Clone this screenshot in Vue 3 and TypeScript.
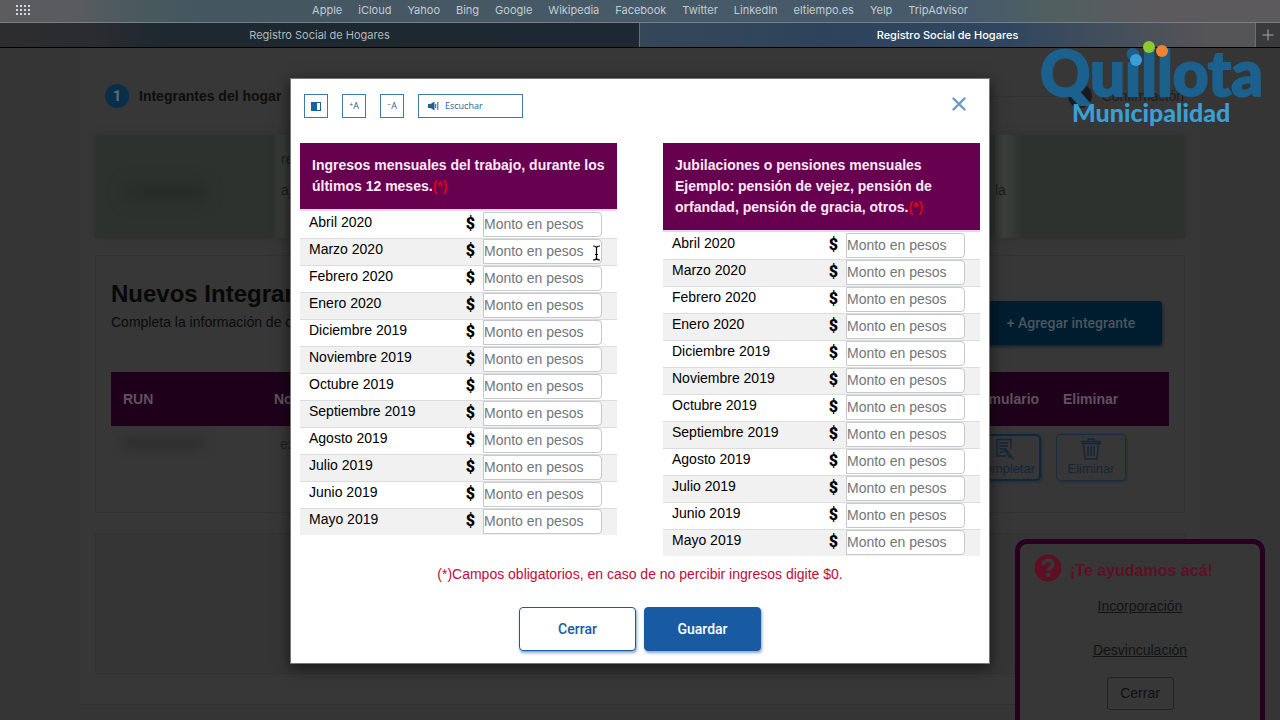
<script setup lang="ts">
import { reactive } from 'vue'

interface IncomeTable {
  id: string
  lines: string[]
  values: string[]
}

const bookmarks: string[] = [
  'Apple', 'iCloud', 'Yahoo', 'Bing', 'Google', 'Wikipedia',
  'Facebook', 'Twitter', 'LinkedIn', 'eltiempo.es', 'Yelp', 'TripAdvisor',
]

const months: string[] = [
  'Abril 2020', 'Marzo 2020', 'Febrero 2020', 'Enero 2020',
  'Diciembre 2019', 'Noviembre 2019', 'Octubre 2019', 'Septiembre 2019',
  'Agosto 2019', 'Julio 2019', 'Junio 2019', 'Mayo 2019',
]

const tables = reactive<IncomeTable[]>([
  {
    id: 'trabajo',
    lines: ['Ingresos mensuales del trabajo, durante los', 'últimos 12 meses.'],
    values: months.map(() => ''),
  },
  {
    id: 'pension',
    lines: ['Jubilaciones o pensiones mensuales', 'Ejemplo: pensión de vejez, pensión de', 'orfandad, pensión de gracia, otros.'],
    values: months.map(() => ''),
  },
])
</script>

<template>
  <div class="screen">
    <header class="browser">
      <nav class="bookmarks" aria-label="Favoritos">
        <svg class="grid-icon" viewBox="0 0 15 13" width="15" height="13" aria-hidden="true">
          <g fill="#d5d8da">
            <template v-for="r in 3" :key="r">
              <rect v-for="c in 4" :key="c" :x="(c - 1) * 4" :y="(r - 1) * 4 + 1" width="2" height="2" />
            </template>
          </g>
        </svg>
        <a v-for="b in bookmarks" :key="b" href="#">{{ b }}</a>
      </nav>
      <div class="tabs">
        <button type="button" class="tab">Registro Social de Hogares</button>
        <button type="button" class="tab active">Registro Social de Hogares</button>
        <button type="button" class="new-tab" aria-label="Nueva pestaña">
          <svg viewBox="0 0 12 12" width="12" height="12"><path d="M6 0.5V11.5M0.5 6H11.5" stroke="#a3a6a8" stroke-width="1" /></svg>
        </button>
      </div>
    </header>

    <main class="page">
      <div class="stepper">
        <span class="step-no">1</span>
        <span class="step-name">Integrantes del hogar</span>
        <span class="step-line"></span>
        <span class="step-no last"></span>
        <span class="step-name last">Confirmación</span>
      </div>

      <section class="notice">
        <span class="smear"></span>
        <div class="notice-edge left"><p>re</p><p>aj</p></div>
        <div class="notice-edge right"><p>&nbsp;</p><p>la</p></div>
      </section>

      <section class="members">
        <div class="members-head">
          <div>
            <h1>Nuevos Integrantes</h1>
            <p>Completa la información de cada integrante</p>
          </div>
          <button type="button" class="add">+ Agregar integrante</button>
        </div>
        <table class="members-table">
          <thead>
            <tr><th class="c-run">RUN</th><th>Nombre</th><th class="c-form">Formulario</th><th class="c-del">Eliminar</th></tr>
          </thead>
          <tbody>
            <tr>
              <td><span class="smear small"></span></td>
              <td class="name">ex</td>
              <td class="form-cell">
                <button type="button" class="act complete">
                  <svg viewBox="0 0 20 22" width="20" height="22" fill="none" stroke="#152638" stroke-width="1.4">
                    <path d="M11 18H2V1.5H16V11M4.5 5H13M4.5 8H13M4.5 11H11M4.5 14H9" />
                    <path d="M10.5 10.5L16.5 18.5L14.5 19.5L9.5 12ZM16.5 18.5L18.5 21" />
                  </svg>
                  Completar
                </button>
              </td>
              <td class="del-cell">
                <button type="button" class="act">
                  <svg viewBox="0 0 20 22" width="20" height="22" fill="none" stroke="#152638" stroke-width="1.4">
                    <path d="M1 5.5V3.5H19V5.5ZM7 3.5V1H13V3.5M2.5 5.5L4 21H16L17.5 5.5M7 8V18M10 8V18M13 8V18" />
                  </svg>
                  Eliminar
                </button>
              </td>
            </tr>
          </tbody>
        </table>
      </section>

      <section class="blank"></section>
    </main>

    <aside class="help">
      <div class="help-title">
        <svg viewBox="0 0 28 28" width="28" height="28" aria-hidden="true">
          <circle cx="14" cy="14" r="13.5" fill="#5f0f24" />
          <path d="M9.2 10.8C9.6 7.6 11.8 6.4 14.2 6.4C16.9 6.4 18.8 7.9 18.8 10.2C18.8 13.2 14.3 13 14.3 16.8" fill="none" stroke="#373737" stroke-width="3.8" />
          <circle cx="14.3" cy="20.8" r="2.4" fill="#373737" />
        </svg>
        <strong>¡Te ayudamos acá!</strong>
      </div>
      <a href="#">Incorporación</a>
      <a href="#">Desvinculación</a>
      <button type="button">Cerrar</button>
    </aside>

    <div class="overlay">
      <section class="modal" role="dialog" aria-label="Ingresos mensuales">
        <div class="tools">
          <button type="button" class="tool" aria-label="Contraste">
            <svg viewBox="0 0 10 9" width="10" height="9"><rect x="0.5" y="0.5" width="9" height="8" fill="#fff" stroke="#1f5f9c" /><rect x="0" y="0" width="6" height="9" fill="#1f5f9c" /></svg>
          </button>
          <button type="button" class="tool"><sup>+</sup>A</button>
          <button type="button" class="tool"><sup>−</sup>A</button>
          <button type="button" class="tool listen">
            <svg viewBox="0 0 11 10" width="11" height="10"><path d="M0 3H2.5L6.5 0.5V9.5L2.5 7H0Z" fill="#1f5f9c" /><path d="M7.7 3V7M9.8 1V9" stroke="#1f5f9c" stroke-width="1" /></svg>
            Escuchar
          </button>
          <button type="button" class="close" aria-label="Cerrar ventana">
            <svg viewBox="0 0 14 14" width="14" height="14"><path d="M1.5 1.5L12.5 12.5M12.5 1.5L1.5 12.5" stroke="#6c9ac4" stroke-width="2.4" stroke-linecap="round" /></svg>
          </button>
        </div>

        <div class="tables">
          <table v-for="t in tables" :key="t.id" class="income">
            <colgroup>
              <col class="month-col" />
              <col class="sign-col" />
              <col class="amount-col" />
            </colgroup>
            <thead>
              <tr>
                <th colspan="3">
                  <template v-for="(l, i) in t.lines" :key="l"><br v-if="i > 0" />{{ l }}</template><span class="req">(*)</span>
                </th>
              </tr>
            </thead>
            <tbody>
              <tr v-for="(m, i) in months" :key="m">
                <td class="month"><label :for="t.id + i">{{ m }}</label></td>
                <td class="sign">$</td>
                <td class="amount"><input :id="t.id + i" v-model="t.values[i]" type="text" placeholder="Monto en pesos" /></td>
              </tr>
            </tbody>
          </table>
        </div>

        <p class="note">(*)Campos obligatorios, en caso de no percibir ingresos digite $0.</p>
        <div class="actions">
          <button type="button" class="btn">Cerrar</button>
          <button type="button" class="btn primary">Guardar</button>
        </div>

        <svg class="cursor" viewBox="0 0 9 16" width="9" height="16" aria-hidden="true">
          <path d="M1 1C3 1 4.5 1.5 4.5 3C4.5 1.5 6 1 8 1M4.5 3V13M3 9.5H6M1 15C3 15 4.5 14.5 4.5 13C4.5 14.5 6 15 8 15" fill="none" stroke="#000" stroke-width="1.2" />
        </svg>
      </section>
    </div>

    <div class="logo">
      <span class="brand">Quillota</span>
      <span class="sub">Municipalidad</span>
      <svg class="dots" viewBox="0 0 40 28" width="40" height="28" aria-hidden="true">
        <circle cx="8" cy="20" r="6" fill="#3a9fd8" />
        <circle cx="21" cy="7" r="6" fill="#8ccb2b" />
        <circle cx="34" cy="11" r="6" fill="#ee8434" />
      </svg>
    </div>
  </div>
</template>

<style>
body {
  margin: 0;
  background: #353535;
}
</style>

<style scoped>
.screen {
  position: relative;
  height: 100vh;
  overflow: hidden;
  background: #353535;
  color: #0b0b0b;
  font: 14px/21px "Liberation Sans", Arial, sans-serif;
}
.screen * { box-sizing: border-box; }
button { font: inherit; margin: 0; padding: 0; cursor: pointer; }
p, h1 { margin: 0; }

.browser { font: 11px/20px Inter, Roboto, sans-serif; border-bottom: 1px solid #000; }
.bookmarks {
  position: relative;
  display: flex;
  justify-content: center;
  gap: 16px;
  height: 23px;
  border-bottom: 1px solid #73808a;
  background: linear-gradient(90deg, #5c5c5f 0, #5a5b5f 6%, #4a5a5e 10%, #44565f 16%, #465a68 50%, #465a6b 76%, #50605f 82%, #5c5a5d 90%);
}
.bookmarks a { color: #c3ccd2; text-decoration: none; }
.grid-icon { position: absolute; left: 16px; top: 4px; }
.tabs { display: flex; height: 24px; }
.tab { border: 0; background: linear-gradient(90deg, #2d2d2f 0, #2b2c2f 14%, #1d2830 26%, #1e2832 100%); color: #b2b8bd; flex: 0 0 50%; border-right: 1px solid #65707a; }
.tab.active { flex: 1 1 0; color: #fff; font-weight: 500; background: linear-gradient(90deg, #354759 0, #2e435b 30%, #304660 60%, #47505a 80%, #555457 92%); }
.new-tab { width: 24px; border: 0; background: #3a3a3c; display: grid; place-items: center; }

.page {
  margin: 0 80px;
  padding: 0 15px 30px;
  background: #373737;
  border-bottom: 1px solid #303030;
}
.stepper { display: flex; align-items: center; height: 96px; padding: 0 1px 0 10px; font-weight: 700; }
.step-no { width: 24px; height: 24px; border-radius: 50%; background: #082f49; color: #5f6b73; text-align: center; font: 700 15px/24px Roboto, sans-serif; }
.step-name { margin-left: 10px; color: #0e0e0e; }
.step-line { flex: 1; height: 1px; margin: 0 0 0 40px; background: #303030; }
.step-no.last { background: #191c1f; }
.step-name.last { font-weight: 400; color: #1e1e1e; }

.notice { position: relative; display: flex; justify-content: space-between; height: 103px; margin: -9px 0 17px; background: #2d322e; box-shadow: 0 0 6px #2d322e; color: #191c1a; }
.notice-edge { display: flex; flex-direction: column; gap: 10px; padding: 14px 8px; line-height: 21px; }
.notice-edge.left { width: 20px; margin-left: 178px; background: linear-gradient(90deg, transparent, #383d39 50%, #2f322f); }
.notice-edge.right { width: 190px; padding-left: 0; background: linear-gradient(90deg, #313531 0, #3b403c 5%, transparent 14%); }
.smear { position: absolute; left: 30px; top: 50px; width: 80px; height: 14px; background: #252a27; filter: blur(8px); }

.members { height: 258px; padding: 24px 15px 0; border: 1px solid #303030; }
.members-head { display: flex; justify-content: space-between; height: 92px; }
h1 { font-size: 24px; line-height: 28px; color: #080808; }
.members-head p { line-height: 28px; }
.add { align-self: flex-start; width: 182px; height: 44px; margin: 21px 7px 0 0; border: 0; border-radius: 4px; background: #001d30; color: #4a565f; font: 500 14px/20px Roboto, sans-serif; box-shadow: 1px 2px 3px #1c2329; }
.members-table { width: 100%; border-collapse: collapse; table-layout: fixed; }
.members-table th { height: 54px; padding: 0 12px; background: #1e001a; color: #5f525d; text-align: left; }
.members-table td { position: relative; padding: 8px 5px; vertical-align: top; }
.c-run { width: 151px; }
.c-form { width: 97px; }
.c-del { width: 118px; }
.members-table .name { padding-left: 18px; color: #202020; }
.members-table .form-cell { text-align: right; padding-right: 10px; }
.form-cell .act, .del-cell .act { display: inline-flex; }
.smear.small { left: 12px; top: 14px; height: 6px; background: #262626; filter: blur(6px); }
.act { flex-direction: column; align-items: center; justify-content: center; width: 70px; height: 47px; border: 1px solid #152c44; border-radius: 5px; background: transparent; color: #152638; font-size: 13px; line-height: 18px; box-shadow: 1px 1px 3px #272b30; }
.act.complete { width: 72px; border: 2px solid #092940; }

.blank { height: 141px; margin-top: 20px; background: #353535; border: 1px solid #323232; }

.help { position: absolute; right: 15px; top: 539px; width: 250px; height: 220px; border: 5px solid #27001f; border-radius: 12px; background: #373737; display: flex; flex-direction: column; align-items: center; color: #101010; }
.help-title { display: flex; align-items: center; gap: 8px; align-self: stretch; height: 50px; padding: 0 0 2px 14px; color: #5f0f24; font-size: 16px; }
.help-title strong { padding-top: 4px; }
.help a { height: 44px; line-height: 24px; color: #131313; text-decoration: underline; }
.help button { width: 67px; height: 33px; border: 1px solid #222; border-radius: 3px; background: transparent; color: #101010; margin-top: -5px; }

.overlay { position: absolute; inset: 78px 0 auto; display: flex; justify-content: center; }
.modal { position: relative; width: 700px; padding: 0 9px 12px; background: #fff; border: 1px solid #777; box-shadow: 0 4px 14px rgba(0, 0, 0, 0.6); color: #000; }
.tools { display: flex; align-items: center; gap: 14px; height: 54px; padding-left: 4px; margin-bottom: 10px; }
.tool { display: inline-flex; align-items: center; justify-content: center; width: 24px; height: 24px; border: 1px solid #3f78ab; background: #fff; color: #1f5f9c; font: 9px/12px "Open Sans", sans-serif; }
.tool sup { font-size: 7px; line-height: 7px; padding-bottom: 4px; }
.tool.listen { width: 105px; justify-content: flex-start; gap: 6px; padding-left: 9px; }
.close { margin: 0 14px 4px auto; width: 14px; height: 14px; border: 0; background: none; }
.close svg { display: block; }
.tables { display: flex; justify-content: space-between; align-items: flex-start; }
.income { width: 317px; border-spacing: 0; table-layout: fixed; }
.month-col { width: 158px; }
.sign-col { width: 25px; }
.income th { padding: 12px; background: #66004f; border-bottom: 2px solid #eed3ee; color: #fbe9fb; text-align: left; line-height: 21px; white-space: nowrap; }
.req { color: #d9001b; }
.income td { height: 27px; padding: 0; vertical-align: top; border-top: 1px solid #dcdcdc; }
.income tbody tr:first-child td { border-top-color: #fff; }
.income tbody tr:nth-child(even) td { background: #f1f1f1; }
.income .month { padding-left: 9px; line-height: 20px; }
.income .sign { padding-right: 8px; text-align: right; font: 900 16px/24px Roboto, sans-serif; }
.amount input { display: block; width: 119px; height: 25px; margin: 0; padding: 0 0 2px; border: 1px solid #c5c8cc; border-radius: 0 4px 4px 0; background: #fff; color: #495057; font: 14px/20px "Liberation Sans", Arial, sans-serif; }
.amount input::placeholder { color: #72767b; opacity: 1; }
.note { height: 36px; line-height: 36px; color: #c2093a; text-align: center; }
.actions { display: flex; justify-content: center; gap: 8px; margin-top: 15px; }
.btn { width: 117px; height: 44px; border: 1px solid #185ba3; border-radius: 4px; background: #fff; color: #185ba3; font: 500 14px/20px Roboto, sans-serif; box-shadow: 1px 2px 3px rgba(24, 75, 140, 0.5); }
.btn.primary { background: #185ba3; color: #fff; }
.cursor { position: absolute; left: 301px; top: 166px; }

.logo { position: absolute; top: 39px; right: 20px; width: 220px; height: 92px; font-family: Lato, sans-serif; font-weight: 900; white-space: nowrap; }
.brand { display: block; font-size: 62px; line-height: 66px; color: #1c618d; -webkit-text-stroke: 2px #1c618d; }
.sub { display: block; padding-left: 32px; font-size: 25px; line-height: 14px; color: #3a9fd5; }
.dots { position: absolute; left: 88px; top: 1px; }
</style>
